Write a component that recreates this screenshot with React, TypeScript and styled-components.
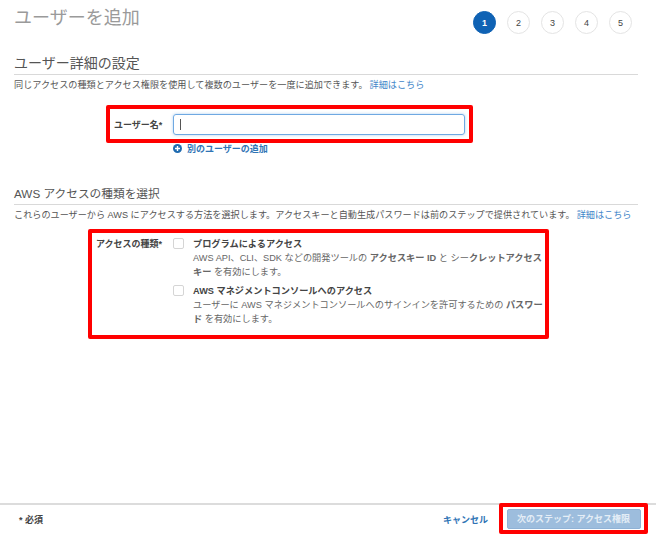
import React from 'react';
import styled, { createGlobalStyle } from 'styled-components';

const GlobalStyle = createGlobalStyle`
  html, body {
    margin: 0;
    padding: 0;
    background: #fff;
  }
  * {
    box-sizing: border-box;
  }
`;

const Page = styled.div`
  display: flex;
  flex-direction: column;
  width: 656px;
  height: 534px;
  overflow: hidden;
  font-family: "Liberation Sans", "Noto Sans CJK JP", sans-serif;
  font-size: 9px;
  color: #444;
`;

const Content = styled.main`
  flex: 1;
  padding: 0 18px 0 14px;
`;

const Header = styled.header`
  display: flex;
  justify-content: space-between;
  height: 42px;
  padding-top: 6px;
`;

const Title = styled.h1`
  margin: 0;
  font-size: 18px;
  line-height: 24px;
  font-weight: 400;
  color: #9a9a9a;
`;

const Steps = styled.ol`
  display: flex;
  gap: 11px;
  margin: 5px 6px 0 0;
  padding: 0;
  list-style: none;
`;

const Step = styled.li<{ $active?: boolean }>`
  display: flex;
  align-items: center;
  justify-content: center;
  width: 23px;
  height: 23px;
  border-radius: 50%;
  font-size: 9px;
  font-weight: ${(p) => (p.$active ? 700 : 400)};
  color: ${(p) => (p.$active ? '#fff' : '#444')};
  background: ${(p) => (p.$active ? '#0f62b4' : '#fff')};
  border: 1px solid ${(p) => (p.$active ? '#0f62b4' : '#e4e4e4')};
`;

const SectionTitle = styled.h2<{ $small?: boolean }>`
  margin: ${(p) => (p.$small ? '0' : '10px 0 0')};
  font-size: ${(p) => (p.$small ? '11.7px' : '14px')};
  line-height: ${(p) => (p.$small ? '20px' : '22px')};
  font-weight: 400;
  color: #555;
  border-bottom: 1px solid #d9d9d9;
`;

const Description = styled.p`
  margin: 3px 0 0;
  font-size: 9.13px;
  line-height: 14px;
  color: #555;
  white-space: nowrap;
`;

const Link = styled.a`
  margin-left: 2px;
  color: #3f86c9;
`;

const Highlight = styled.div<{ $left: number; $width: number }>`
  margin-left: ${(p) => p.$left}px;
  width: ${(p) => p.$width}px;
  border: 4px solid #f00;
  border-radius: 2px;
`;

const NameBox = styled(Highlight)`
  display: flex;
  align-items: center;
  height: 38px;
  margin-top: 13px;
  padding: 1px 4px 0 4px;
`;

const FieldLabel = styled.label`
  width: 59px;
  font-size: 9px;
  font-weight: 700;
  color: #444;
  white-space: nowrap;
`;

const TextInput = styled.div`
  display: flex;
  align-items: center;
  flex: 1;
  height: 21px;
  padding-left: 6px;
  border: 1px solid #6fa9e2;
  border-radius: 3px;
  box-shadow: 0 0 3px rgba(90, 160, 230, 0.5);
`;

const Caret = styled.span`
  width: 1px;
  height: 11px;
  background: #555;
`;

const AddUser = styled.a`
  display: flex;
  align-items: center;
  gap: 5px;
  height: 14px;
  margin: -2px 0 0 159px;
  font-size: 9px;
  font-weight: 700;
  color: #2f74b5;
`;

const AccessSection = styled.section`
  margin-top: 29px;
`;

const AccessBox = styled(Highlight)`
  display: flex;
  height: 110px;
  margin-top: 7px;
  padding: 4px 0 0 4px;
`;

const AccessLabel = styled(FieldLabel)`
  width: 77px;
  line-height: 14px;
`;

const Options = styled.div`
  display: flex;
  flex-direction: column;
  flex: 1;
  gap: 5px;
`;

const Option = styled.div`
  display: flex;
  gap: 9px;
`;

const Checkbox = styled.span`
  flex: none;
  width: 11px;
  height: 11px;
  margin-top: 1px;
  border: 1px solid #d5d5d5;
  border-radius: 2px;
`;

const OptionText = styled.div`
  flex: 1;
  font-size: 9.2px;
  line-height: 14px;
  color: #666;
  white-space: nowrap;
`;

const OptionTitle = styled.div`
  font-weight: 700;
  color: #444;
`;

const Footer = styled.footer`
  display: flex;
  align-items: center;
  height: 31px;
  padding: 0 8px 0 19px;
  border-top: 2px solid #dcdcdc;
`;

const Required = styled.span`
  flex: 1;
  font-size: 9px;
  font-weight: 700;
  color: #444;
`;

const Cancel = styled.a`
  margin-right: 11px;
  font-size: 9px;
  font-weight: 700;
  color: #2f74b5;
`;

const ButtonBox = styled.div`
  display: flex;
  align-items: center;
  justify-content: center;
  width: 149px;
  height: 31px;
  margin-top: -2px;
  border: 4px solid #f00;
  border-radius: 2px;
`;

const NextButton = styled.button`
  width: 134px;
  height: 20px;
  padding: 0;
  border: 1px solid #8fb2d6;
  border-radius: 2px;
  background: #9dbddd;
  font-family: inherit;
  font-size: 9px;
  font-weight: 700;
  color: #e4edf6;
`;

const PlusIcon = () => (
  <svg width="9" height="9" viewBox="0 0 9 9" aria-hidden="true">
    <circle cx="4.5" cy="4.5" r="4.5" fill="#1f6bb0" />
    <path d="M4.5 2v5M2 4.5h5" stroke="#fff" strokeWidth="1.4" />
  </svg>
);

const App: React.FC = () => {
  return (
    <Page>
      <GlobalStyle />
      <Content>
        <Header>
          <Title>ユーザーを追加</Title>
          <Steps>
            {[1, 2, 3, 4, 5].map((n) => (
              <Step key={n} $active={n === 1}>
                {n}
              </Step>
            ))}
          </Steps>
        </Header>
        <section>
          <SectionTitle>ユーザー詳細の設定</SectionTitle>
          <Description>
            同じアクセスの種類とアクセス権限を使用して複数のユーザーを一度に追加できます。
            <Link>詳細はこちら</Link>
          </Description>
          <NameBox $left={92} $width={367}>
            <FieldLabel>ユーザー名*</FieldLabel>
            <TextInput>
              <Caret />
            </TextInput>
          </NameBox>
          <AddUser>
            <PlusIcon />
            別のユーザーの追加
          </AddUser>
        </section>
        <AccessSection>
          <SectionTitle $small>AWS アクセスの種類を選択</SectionTitle>
          <Description>
            これらのユーザーから AWS にアクセスする方法を選択します。アクセスキーと自動生成パスワードは前のステップで提供されています。
            <Link>詳細はこちら</Link>
          </Description>
          <AccessBox $left={74} $width={461}>
            <AccessLabel>アクセスの種類*</AccessLabel>
            <Options>
              <Option>
                <Checkbox />
                <OptionText>
                  <OptionTitle>プログラムによるアクセス</OptionTitle>
                  AWS API、CLI、SDK などの開発ツールの <b>アクセスキー ID</b> と シー<b>クレットアクセス<br />キー</b> を有効にします。
                </OptionText>
              </Option>
              <Option>
                <Checkbox />
                <OptionText>
                  <OptionTitle>AWS マネジメントコンソールへのアクセス</OptionTitle>
                  ユーザーに AWS マネジメントコンソールへのサインインを許可するための <b>パスワー<br />ド</b> を有効にします。
                </OptionText>
              </Option>
            </Options>
          </AccessBox>
        </AccessSection>
      </Content>
      <Footer>
        <Required>* 必須</Required>
        <Cancel>キャンセル</Cancel>
        <ButtonBox>
          <NextButton>次のステップ: アクセス権限</NextButton>
        </ButtonBox>
      </Footer>
    </Page>
  );
};

export default App;
